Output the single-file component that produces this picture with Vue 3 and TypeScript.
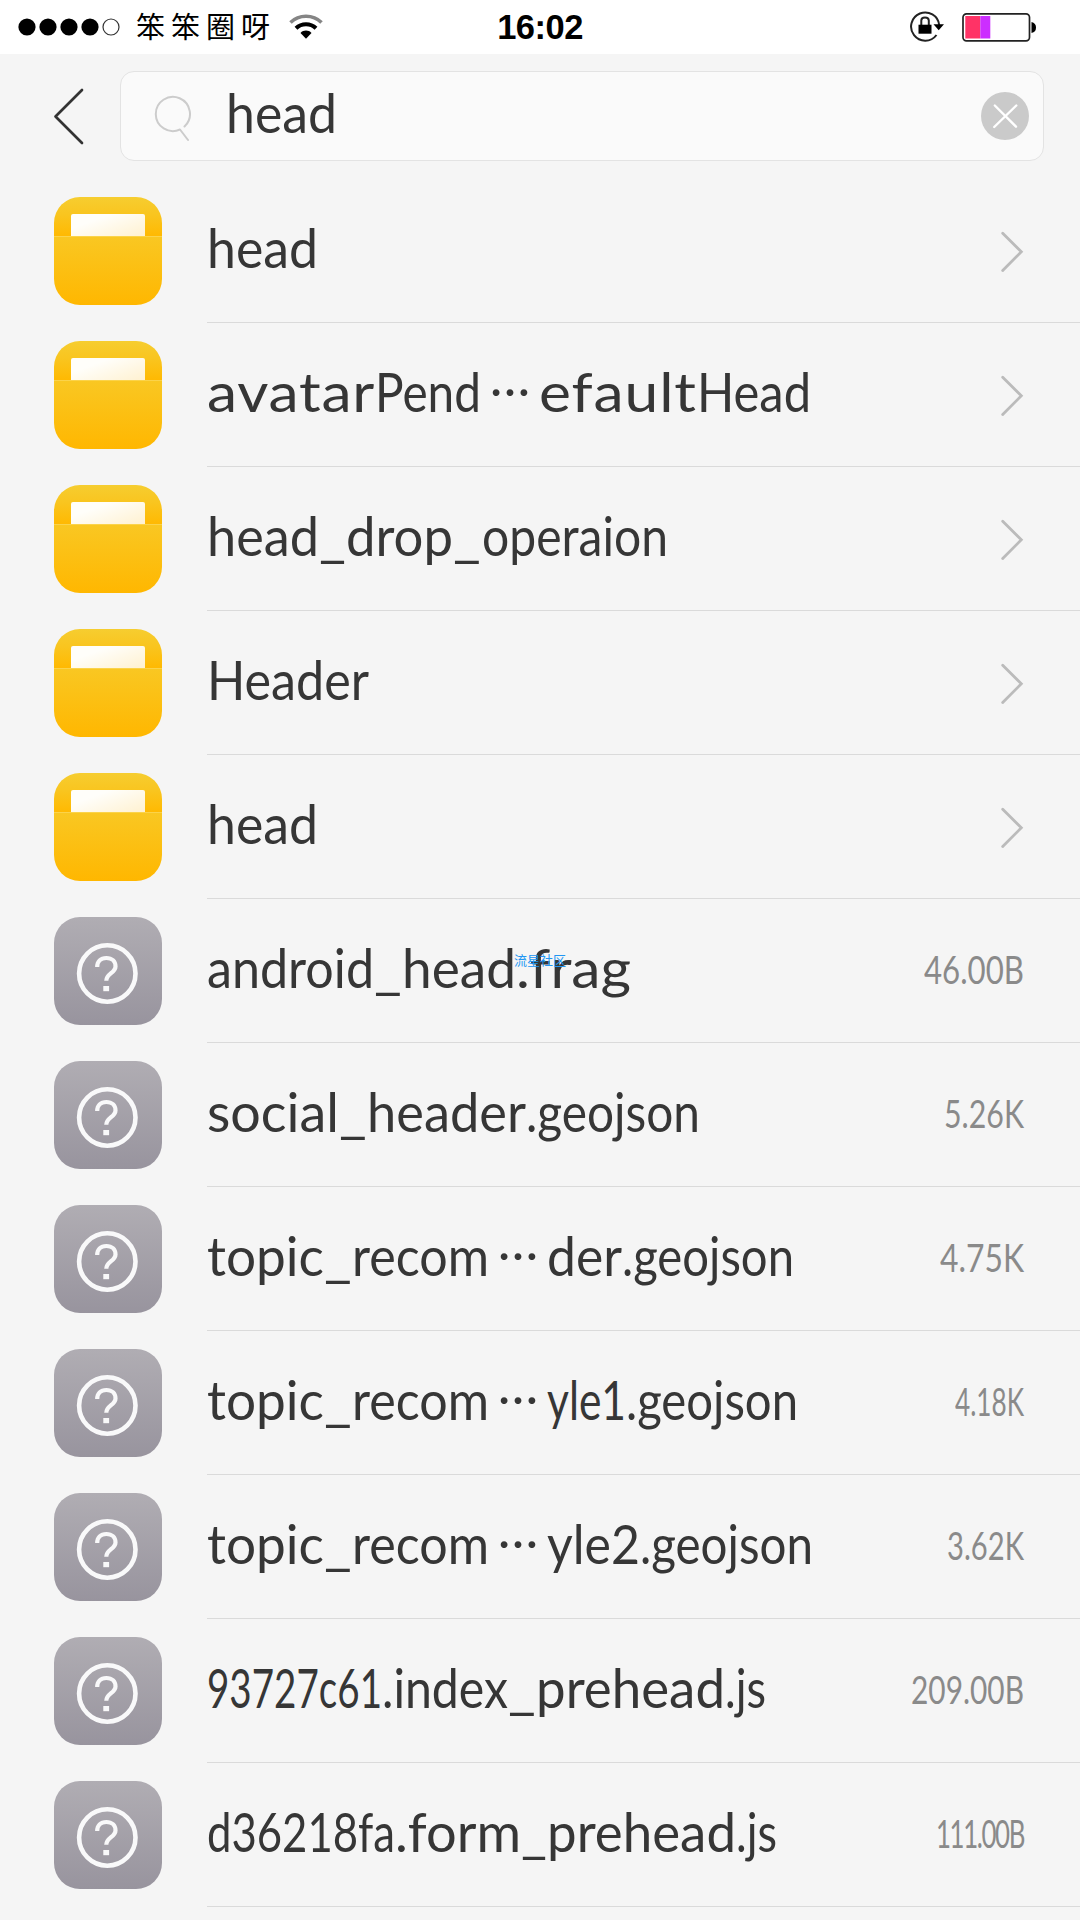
<script setup lang="ts">
import { nextTick, onMounted, ref } from 'vue'

interface Part {
  text: string
  width: number
  dots?: boolean
}
interface Entry {
  folder: boolean
  parts: Part[]
  size?: string
  sizeWidth?: number
}

const dots: Part = { text: '…', width: 58, dots: true }

const entries: Entry[] = [
  { folder: true, parts: [{ text: 'head', width: 111 }] },
  { folder: true, parts: [{ text: 'avatar', width: 168 }, { text: 'Pend', width: 106 }, dots, { text: 'efault', width: 158 }, { text: 'Head', width: 114 }] },
  { folder: true, parts: [{ text: 'head', width: 112 }, { text: '_', width: 27 }, { text: 'drop', width: 107 }, { text: '_', width: 29 }, { text: 'operaion', width: 186 }] },
  { folder: true, parts: [{ text: 'Header', width: 162 }] },
  { folder: true, parts: [{ text: 'head', width: 111 }] },
  { folder: false, parts: [{ text: 'android', width: 167 }, { text: '_', width: 28 }, { text: 'head', width: 114 }, { text: '.frag', width: 115 }], size: '46.00B', sizeWidth: 100 },
  { folder: false, parts: [{ text: 'social', width: 132 }, { text: '_', width: 28 }, { text: 'header', width: 159 }, { text: '.geojson', width: 174 }], size: '5.26K', sizeWidth: 80 },
  { folder: false, parts: [{ text: 'topic', width: 117 }, { text: '_', width: 28 }, { text: 'recom', width: 137 }, dots, { text: 'der', width: 75 }, { text: '.geojson', width: 172 }], size: '4.75K', sizeWidth: 84 },
  { folder: false, parts: [{ text: 'topic', width: 117 }, { text: '_', width: 28 }, { text: 'recom', width: 137 }, dots, { text: 'yle1', width: 79 }, { text: '.geojson', width: 172 }], size: '4.18K', sizeWidth: 69 },
  { folder: false, parts: [{ text: 'topic', width: 117 }, { text: '_', width: 28 }, { text: 'recom', width: 137 }, dots, { text: 'yle2', width: 93 }, { text: '.geojson', width: 173 }], size: '3.62K', sizeWidth: 77 },
  { folder: false, parts: [{ text: '93727c61', width: 175 }, { text: '.index', width: 126 }, { text: '_', width: 28 }, { text: 'prehead', width: 189 }, { text: '.js', width: 41 }], size: '209.00B', sizeWidth: 113 },
  { folder: false, parts: [{ text: 'd36218fa', width: 188 }, { text: '.form', width: 126 }, { text: '_', width: 26 }, { text: 'prehead', width: 189 }, { text: '.js', width: 41 }], size: '111.00B', sizeWidth: 88 },
]

const root = ref<HTMLElement | null>(null)

// Narrows or widens the letters, then their spacing, so every piece takes its own width.
onMounted(async () => {
  await nextTick()
  root.value?.querySelectorAll<HTMLElement>('[data-fit]').forEach((el) => {
    const target = Number(el.dataset.fit)
    const natural = el.getBoundingClientRect().width
    const count = (el.textContent ?? '').length
    const scale = Math.min(1.12, Math.max(0.68, target / natural))
    const spacing = (target / scale - natural) / count
    el.style.letterSpacing = `${spacing}px`
    el.style.transform = `scaleX(${scale})`
    el.style.marginRight = `${target - target / scale}px`
  })
})
</script>

<template>
  <div ref="root" class="screen">
    <header class="status">
      <div class="status-left">
        <svg class="signal" width="104" height="20" viewBox="0 0 104 20">
          <circle v-for="n in 4" :key="n" :cx="n * 21 - 12" cy="10" r="8.6" fill="#000" />
          <circle cx="93" cy="10" r="8" fill="none" stroke="#333" stroke-width="1.2" />
        </svg>
        <span class="carrier">笨笨圈呀</span>
        <svg class="wifi" width="34" height="26" viewBox="0 0 34 26" fill="none">
          <path d="M1.5 8.5C10 .2 24 .2 32.500 8.500" stroke="#858585" stroke-width="3.600" />
          <path d="M7 14.300C12.500 9 21.500 9 27 14.300" stroke="#000" stroke-width="4" />
          <path d="M11.500 19C14.500 15.800 19.500 15.800 22.500 19L17 24.800Z" fill="#000" />
        </svg>
      </div>
      <span class="time">16:02</span>
      <div class="status-right">
        <svg width="36" height="32" viewBox="0 0 36 32" fill="none">
          <path d="M30.200 14A14.100 14.100 0 1 0 27.500 24" stroke="#222" stroke-width="2" />
          <path d="M24.500 13.300H35L29.700 19.200Z" fill="#000" />
          <path d="M12.300 14.500V9.500Q12.300 6.500 16 6.500T19.800 9.500V14.500" stroke="#222" stroke-width="2" />
          <rect x="9.500" y="13.700" width="13" height="9" fill="#000" />
        </svg>
        <svg class="battery" width="75" height="30" viewBox="0 0 75 30" fill="none">
          <rect x="1" y="1.800" width="66.500" height="27" rx="3.500" stroke="#222" stroke-width="1.700" />
          <rect x="3.300" y="4" width="15" height="22.500" fill="#ff3366" />
          <rect x="18.300" y="4" width="10" height="22.500" fill="#cc2eff" />
          <path d="M69.500 10Q74 11 74 15.500T69.500 21Z" fill="#000" />
        </svg>
      </div>
    </header>

    <div class="search-row">
      <svg class="back" width="32" height="58" viewBox="0 0 32 58" fill="none">
        <path d="M29 3L2.500 29.500L29 56" stroke="#333" stroke-width="2.700" stroke-linecap="round" stroke-linejoin="round" />
      </svg>
      <div class="search-box">
        <svg class="lens" width="38" height="48" viewBox="0 0 38 48" fill="none" stroke="#ccc" stroke-width="2" stroke-linecap="round" stroke-linejoin="round">
          <path d="M30.500 32.500A17.100 17.100 0 1 0 26 35.500L34 46" />
        </svg>
        <span class="query"><span data-fit="111">head</span></span>
        <svg class="clear" width="48" height="48" viewBox="0 0 48 48">
          <circle cx="24" cy="24" r="24" fill="#cacaca" />
          <path d="M13.800 13.500L35 34.700M35.300 13.500L13.200 35" stroke="#fff" stroke-width="2.400" stroke-linecap="round" />
        </svg>
      </div>
    </div>

    <main class="list">
      <div v-for="(entry, i) in entries" :key="i" class="row">
        <div v-if="entry.folder" class="icon folder">
          <div class="pocket"><div class="paper"></div></div>
          <div class="front"></div>
        </div>
        <div v-else class="icon file">
          <svg width="108" height="108" viewBox="0 0 108 108" fill="none" stroke="#f9f9fa">
            <circle cx="53.300" cy="56.500" r="28.200" stroke-width="4.600" />
            <path d="M43.200 50C43.200 44.500 46.500 41 52.400 41C58 41 61.500 44.500 61.500 49.500C61.500 56 52.300 56.500 52.300 63.700" stroke-width="4.200" />
            <rect x="49.300" y="69" width="5.800" height="5.200" fill="#f9f9fa" stroke="none" />
          </svg>
        </div>
        <div class="body">
          <span class="name"><span
            v-for="(part, k) in entry.parts"
            :key="k"
            :class="{ dots: part.dots }"
            :data-fit="part.dots ? null : part.width"
          >{{ part.text }}</span></span>
          <svg v-if="entry.folder" class="chevron" width="24" height="42" viewBox="0 0 24 42" fill="none">
            <path d="M2.700 2.300L21.300 20.800L2.700 39.500" stroke="#bbb" stroke-width="2.800" stroke-linecap="round" />
          </svg>
          <span v-else class="size"><span :data-fit="entry.sizeWidth">{{ entry.size }}</span></span>
        </div>
      </div>
    </main>
    <span class="mark">流星社区</span>
  </div>
</template>

<style scoped>
.screen {
  position: relative;
  box-sizing: border-box;
  width: 1080px;
  height: 1920px;
  overflow: hidden;
  background: #f5f5f5;
  color: #363636;
  font-family: Lato, 'Noto Sans CJK SC', sans-serif;
}
.screen svg {
  display: block;
  flex: none;
}
[data-fit] {
  display: inline-block;
  flex: none;
  transform-origin: 0 50%;
}
.status {
  display: grid;
  grid-template-columns: 1fr auto 1fr;
  align-items: center;
  height: 54px;
  background: #fff;
  color: #000;
}
.status-left,
.status-right {
  display: flex;
  align-items: center;
}
.status-left {
  padding-left: 18px;
}
.carrier {
  margin-left: 14px;
  padding-bottom: 3px;
  font: 400 29px/51px 'Noto Sans CJK SC', sans-serif;
  letter-spacing: 6px;
  white-space: nowrap;
}
.wifi {
  margin-left: 13px;
}
.time {
  font: 700 34.5px/54px 'Liberation Sans', Arial, sans-serif;
  letter-spacing: -0.5px;
}
.status-right {
  justify-content: flex-end;
  padding-right: 43px;
}
.battery {
  margin-left: 17px;
}
.search-row {
  display: flex;
  align-items: center;
  box-sizing: border-box;
  height: 125px;
  padding: 0 36px 1px 53px;
}
.back {
  margin-right: 35px;
}
.search-box {
  display: flex;
  flex: 1;
  align-items: center;
  box-sizing: border-box;
  height: 90px;
  padding: 0 14px 0 33px;
  border: 1px solid #e3e3e3;
  border-radius: 14px;
  background: #fafafa;
}
.lens {
  margin-top: 4px;
}
.query {
  flex: 1;
  margin-left: 34px;
  padding-bottom: 7px;
  font-size: 54px;
  line-height: 64px;
  white-space: nowrap;
}
.row {
  display: flex;
  height: 144px;
  padding-left: 54px;
}
.icon {
  flex: none;
  width: 108px;
  height: 108px;
  margin-top: 18px;
  margin-right: 45px;
  border-radius: 26px;
  overflow: hidden;
}
.pocket {
  box-sizing: border-box;
  height: 39px;
  padding: 17px 17px 0;
  background: linear-gradient(#f6cd30, #f9c51f 45%, #ffb902);
}
.paper {
  height: 22px;
  border-radius: 2px 2px 0 0;
  background: linear-gradient(160deg, #fffefa 30%, #fff1d0);
}
.front {
  box-sizing: border-box;
  height: 69px;
  border-top: 1px solid #fbd34a;
  background: linear-gradient(#f9c722, #ffb700);
}
.file {
  background: linear-gradient(#b0adb3, #98949e);
}
.body {
  display: flex;
  flex: 1;
  align-items: center;
  justify-content: space-between;
  box-sizing: border-box;
  padding-right: 56px;
  border-bottom: 1px solid #dadada;
}
.name {
  display: flex;
  padding-bottom: 6px;
  font-size: 54px;
  line-height: 64px;
  white-space: pre;
}
.dots {
  position: relative;
  top: -16px;
  flex: none;
  width: 58px;
  text-align: center;
}
.size {
  padding-bottom: 4px;
  color: #8a8a8a;
  font-size: 38px;
  line-height: 48px;
  white-space: nowrap;
}
.chevron {
  margin-top: 2px;
}
.mark {
  position: absolute;
  top: 950px;
  left: 514px;
  color: #2196f3;
  font: 400 13px/20px 'Noto Sans CJK SC', sans-serif;
  white-space: nowrap;
}
</style>

<style>
body {
  margin: 0;
  background: #f5f5f5;
}
</style>
